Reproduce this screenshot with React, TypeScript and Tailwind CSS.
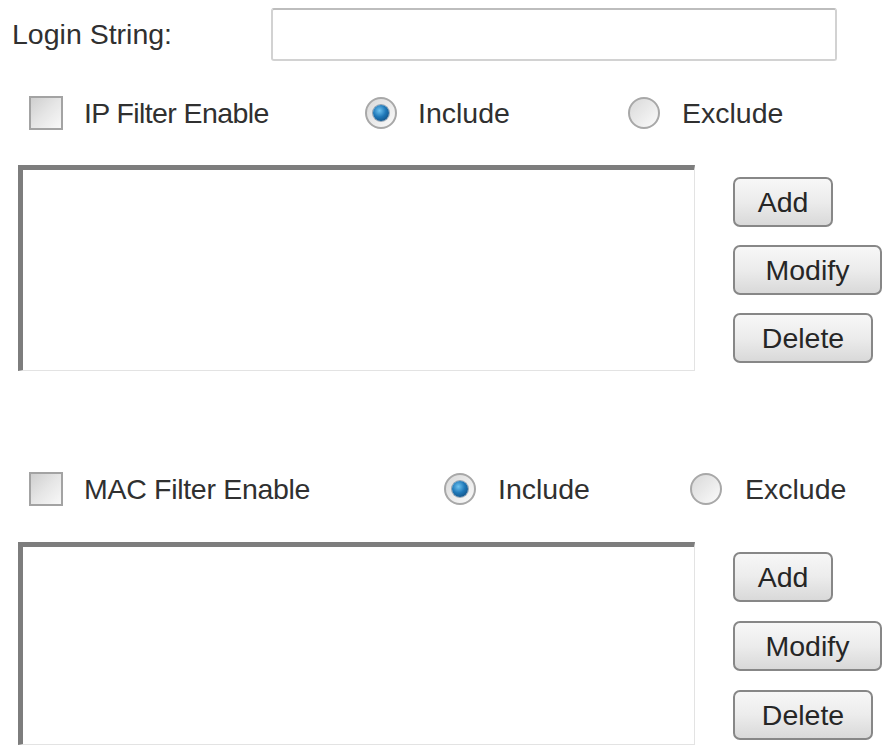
import React from "react";

function Checkbox() {
    return (
        <span className="block w-[34px] h-[34px] shrink-0 border-2 border-[#a3a3a3] bg-gradient-to-br from-[#cfcfcf] via-[#e6e6e6] to-[#f8f8f8]" />
    );
}

function Radio({ checked }: { checked?: boolean }) {
    return (
        <span className="relative flex items-center justify-center w-[32px] h-[32px] shrink-0 rounded-full border-2 border-[#a8a8a8] bg-gradient-to-br from-[#d9d9d9] to-[#fbfbfb]">
            {checked && (
                <span className="block w-[16px] h-[16px] rounded-full bg-[radial-gradient(circle_at_40%_35%,#6fc3f0_0%,#1f78b8_45%,#0b3f6e_100%)] shadow-[0_0_0_1px_rgba(20,60,100,0.4)]" />
            )}
        </span>
    );
}

function Btn({ label, w }: { label: string; w: string }) {
    return (
        <button
            type="button"
            className={`${w} h-[50px] rounded-[7px] border-2 border-[#878787] bg-gradient-to-b from-[#f7f7f7] via-[#ececec] to-[#d9d9d9] text-[#262626] leading-none`}
        >
            {label}
        </button>
    );
}

type HeaderProps = { title: string; titleW: string; titleTrack: string; incW: string; incGap: string; excGap: string };

function FilterHeader({ title, titleW, titleTrack, incW, incGap, excGap }: HeaderProps) {
    return (
        <div className="flex items-center pl-[29px] h-[34px]">
            <Checkbox />
            <span className={`ml-[21px] ${titleW} ${titleTrack} whitespace-nowrap`}>{title}</span>
            <Radio checked />
            <span className={`${incGap} ${incW}`}>Include</span>
            <Radio />
            <span className={excGap}>Exclude</span>
        </div>
    );
}

function FilterList({ h, btnPad, btnGap }: { h: string; btnPad: string; btnGap: string }) {
    return (
        <div className="flex pl-[18px]">
            <div className={`w-[677px] ${h} bg-white border-t-[5px] border-l-[5px] border-t-[#7d7d7d] border-l-[#7d7d7d] border-r border-b border-r-[#e3e3e3] border-b-[#e3e3e3]`} />
            <div className={`flex flex-col ml-[38px] ${btnPad} ${btnGap}`}>
                <Btn label="Add" w="w-[100px]" />
                <Btn label="Modify" w="w-[149px]" />
                <Btn label="Delete" w="w-[140px]" />
            </div>
        </div>
    );
}

export default function App() {
    return (
        <div
            className="w-[887px] h-[746px] overflow-hidden bg-white text-[28.5px] text-[#303030]"
            style={{ fontFamily: '"Liberation Sans", Arial, sans-serif' }}
        >
            {/* Login row */}
            <div className="flex items-center pt-[8px] pl-[12px]">
                <span className="w-[259px]">Login String:</span>
                <div className="w-[566px] h-[53px] rounded-[3px] border-2 border-[#d2d2d2] border-t-[#bdbdbd] bg-white" />
            </div>

            {/* IP filter */}
            <div className="mt-[35px]">
                <FilterHeader title="IP Filter Enable" titleW="w-[281px]" titleTrack="tracking-[-0.6px]" incGap="ml-[21px]" incW="w-[210px]" excGap="ml-[22px]" />
            </div>
            <div className="mt-[35px]">
                <FilterList h="h-[206px]" btnPad="pt-[12px]" btnGap="gap-[18px]" />
            </div>

            {/* MAC filter */}
            <div className="mt-[101px]">
                <FilterHeader title="MAC Filter Enable" titleW="w-[360px]" titleTrack="tracking-[-0.3px]" incGap="ml-[22px]" incW="w-[192px]" excGap="ml-[23px]" />
            </div>
            <div className="mt-[36px]">
                <FilterList h="h-[203px]" btnPad="pt-[10px]" btnGap="gap-[19px]" />
            </div>
        </div>
    );
}
